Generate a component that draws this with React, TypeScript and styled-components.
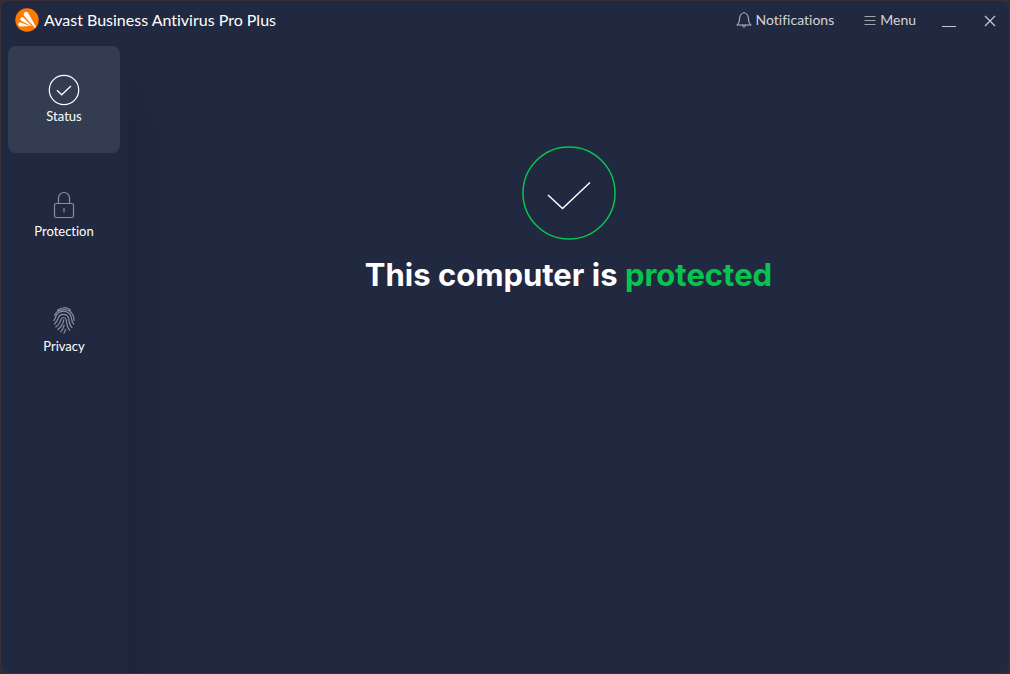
import React from "react";
import styled, { createGlobalStyle } from "styled-components";

const Global = createGlobalStyle`
  * { box-sizing: border-box; }
  body { margin: 0; background: #3c2c2c; }
  button { margin: 0; padding: 0; border: 0; background: none; color: inherit; font: inherit; cursor: pointer; }
`;

const AppWindow = styled.div`
  display: flex;
  flex-direction: column;
  min-height: 100vh;
  border: 1px solid #3a2f36;
  border-radius: 8px;
  overflow: hidden;
  background: #212940;
  color: #fff;
  font-family: Lato, "Open Sans", sans-serif;
  font-variant-ligatures: none;
`;

const TitleBar = styled.header`
  display: flex;
  align-items: center;
  justify-content: space-between;
  height: 38px;
  padding: 0 12px 0 14px;
`;

const Brand = styled.div`
  display: flex;
  align-items: center;
  gap: 5px;
  font-size: 16px;
  line-height: 20px;
`;

const Actions = styled.div`
  display: flex;
  align-items: center;
  color: #d3d5da;
  font-size: 14px;
  line-height: 20px;
`;

const Action = styled.button<{ $after: number }>`
  display: flex;
  align-items: center;
  gap: 4px;
  margin-right: ${(p) => p.$after}px;
`;

const Body = styled.div`
  display: flex;
  flex: 1;
`;

const Sidebar = styled.nav`
  display: flex;
  flex-direction: column;
  gap: 8px;
  flex: 0 0 127px;
  padding: 7px 8px 0 7px;
`;

const NavItem = styled.button<{ $active?: boolean }>`
  display: flex;
  flex-direction: column;
  align-items: center;
  justify-content: center;
  height: 107px;
  border-radius: 8px;
  background: ${(p) => (p.$active ? "#343c51" : "transparent")};
  font-size: 13px;
  line-height: 20px;
`;

const Main = styled.main`
  display: flex;
  flex-direction: column;
  align-items: center;
  flex: 1;
  padding-top: 107px;
  background:
    linear-gradient(to bottom, #212940 8px, #21294000 96px),
    linear-gradient(to right, #1c2539, #212940 48px);
`;

const Headline = styled.h1`
  margin: 13px 0 0;
  font-family: Inter, "Open Sans", sans-serif;
  font-size: 31px;
  line-height: 44px;
  font-weight: 700;
  text-align: center;
`;

const Good = styled.span`
  color: #07c44f;
`;

const Logo = () => (
  <svg width="24" height="24" viewBox="0 0 24 24" aria-hidden="true">
    <circle cx="12" cy="12" r="11.7" fill="#ff7800" />
    <g fill="#fff">
      <path d="M9.200 4.800c.8-1.500 3.200-1.500 3.900.1l7.700 13.700c.4.900-.4 1.500-1.100.8L9.400 8.300c-.9-1-1-2.300-.2-3.500z" />
      <path d="M5.900 9.800c.7-.9 1.900-.9 2.700-.1l8.700 8.700-10.800-5.500c-1.200-.7-1.400-2.100-.6-3.100z" />
      <path d="M3.500 15.300c.4-.9 1.300-1.200 2.300-.9l9.500 3.700-9.900.3c-1.600 0-2.500-1.600-1.900-3.100z" />
    </g>
  </svg>
);

const BellIcon = () => (
  <svg width="16" height="16" viewBox="0 0 16 16" fill="none" stroke="#c3c6cd" aria-hidden="true">
    <path d="M.8 13h14.400c-1.900-1.300-2.500-2.900-2.700-5.800-.2-3.300-1.200-5.300-3.100-5.900-.5-1-2.300-1-2.800 0-1.900.6-2.900 2.600-3.100 5.900C3.300 10.100 2.700 11.700.8 13zM6.500 13.500c0 2 3 2 3 0" />
  </svg>
);

const MenuIcon = () => (
  <svg width="12" height="12" viewBox="0 0 12 12" stroke="#a0a4ae" aria-hidden="true">
    <path d="M.5 2.500h11M.5 6.500h11M.5 10.500h11" />
  </svg>
);

const MinimizeIcon = () => (
  <svg width="14" height="14" viewBox="0 0 14 14" stroke="#c3c6cd" aria-hidden="true">
    <path d="M0 13.500h14" />
  </svg>
);

const CloseIcon = () => (
  <svg width="14" height="14" viewBox="0 0 14 14" stroke="#c3c6cd" strokeWidth="1.3" aria-hidden="true">
    <path d="M2 3l10 10M12 3L2 13" />
  </svg>
);

const StatusIcon = () => (
  <svg width="32" height="32" viewBox="0 0 32 32" fill="none" stroke="#fff" strokeWidth="1.200" aria-hidden="true">
    <circle cx="16" cy="16" r="14.700" />
    <path d="M9 16.300l4.700 4.500L23 12" />
  </svg>
);

const LockIcon = () => (
  <svg width="32" height="32" viewBox="0 0 32 32" fill="none" stroke="#8b909d" strokeWidth="1.200" aria-hidden="true">
    <rect x="6.500" y="14.500" width="19" height="14" rx="1.500" />
    <path d="M10.500 14.500V9a5.500 5.500 0 0 1 11 0v5.500M16 19v4.500" />
  </svg>
);

const FingerprintIcon = () => (
  <svg width="32" height="32" viewBox="0 0 32 32" fill="none" stroke="#8b909d" strokeWidth="1.200" strokeLinecap="round" aria-hidden="true">
    <path d="M9.500 6.200C13 3 19 2.800 22.600 6.200M6.500 11.500C9.500 4 21.500 3.200 25 11.300c.7 1.800 1 3.200 1 5.200" />
    <path d="M6 16.500c1.500-1.800 1.300-3.700 2.500-5.600 3.300-5.200 12-4.600 14.300.9.900 2.600.7 6.400 2.900 8.200" />
    <path d="M6.500 20c2.700-2.200 3-4.300 4-6.700 1.800-4.200 8.200-3.900 9.900.3 1.200 3.300.5 7.400 3.600 9.900" />
    <path d="M7.800 23c3.300-2 4.300-4.500 5.100-7.300.9-3 4.500-2.900 5.200-.1.900 3.900.6 7.500 3.600 10.700" />
    <path d="M9.800 25.500c3.700-2.300 5.200-5.500 5.900-9.600M12.600 27.700c1.900-1.800 3-3.900 3.500-6.400M16 29c.7-1 1.300-2.200 1.600-3.600" />
  </svg>
);

const ProtectedIcon = () => (
  <svg width="94" height="94" viewBox="0 0 94 94" fill="none" aria-hidden="true">
    <circle cx="47" cy="47" r="46" stroke="#07c44f" strokeWidth="1.500" />
    <path d="M26 49l14.500 13.500L68 36.500" stroke="#fff" strokeWidth="1.500" />
  </svg>
);

export default function App() {
  return (
    <>
      <Global />
      <AppWindow>
        <TitleBar>
          <Brand><Logo />Avast Business Antivirus Pro Plus</Brand>
          <Actions>
            <Action $after={30}><BellIcon />Notifications</Action>
            <Action $after={26}><MenuIcon />Menu</Action>
            <Action $after={27} aria-label="Minimize"><MinimizeIcon /></Action>
            <Action $after={0} aria-label="Close"><CloseIcon /></Action>
          </Actions>
        </TitleBar>
        <Body>
          <Sidebar>
            <NavItem $active aria-current="page"><StatusIcon />Status</NavItem>
            <NavItem><LockIcon />Protection</NavItem>
            <NavItem><FingerprintIcon />Privacy</NavItem>
          </Sidebar>
          <Main>
            <ProtectedIcon />
            <Headline>This computer is <Good>protected</Good></Headline>
          </Main>
        </Body>
      </AppWindow>
    </>
  );
}
